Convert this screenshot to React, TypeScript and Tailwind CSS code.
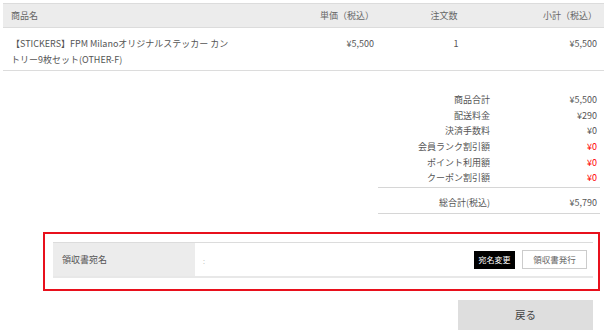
import React from "react";

const rows: { label: string; value: string; red?: boolean }[] = [
  { label: "商品合計", value: "¥5,500" },
  { label: "配送料金", value: "¥290" },
  { label: "決済手数料", value: "¥0" },
  { label: "会員ランク割引額", value: "¥0", red: true },
  { label: "ポイント利用額", value: "¥0", red: true },
  { label: "クーポン割引額", value: "¥0", red: true },
];

export default function App() {
  return (
    <div className="w-[612px] h-[335px] bg-white overflow-hidden font-['Noto_Sans_CJK_JP',sans-serif] text-[9px] text-[#555]">
      <div className="pt-[3px] pl-[3px] w-[604px]">
        <div className="flex items-center h-[25px] bg-[#ececec] border-t border-b border-[#dcdcdc] text-[#666]">
          <div className="w-[300px] pl-[8px]">商品名</div>
          <div className="w-[71px] text-right">単価（税込）</div>
          <div className="w-[140px] text-center">注文数</div>
          <div className="w-[90px] text-right pr-[7px]">小計（税込）</div>
        </div>
        <div className="flex items-start h-[43px] border-b border-[#dcdcdc] leading-[16px]">
          <div className="w-[300px] pl-[8px] pt-[8px]">
            <div className="w-[226px]">【STICKERS】FPM Milanoオリジナルステッカー カントリー9枚セット(OTHER-F)</div>
          </div>
          <div className="w-[71px] text-right pt-[8px]">¥5,500</div>
          <div className="w-[140px] text-center pt-[8px] pl-[24px]">1</div>
          <div className="w-[90px] text-right pr-[7px] pt-[8px]">¥5,500</div>
        </div>
      </div>

      <div className="ml-[378px] w-[222px] mt-[21px]">
        <div className="pb-[1px]">
          {rows.map((r) => (
            <div key={r.label} className="flex h-[15.7px] leading-[15.7px]">
              <div className="w-[112px] text-right">{r.label}</div>
              <div className={"flex-1 text-right pr-[3px] " + (r.red ? "text-[#ff0000]" : "")}>{r.value}</div>
            </div>
          ))}
        </div>
        <div className="border-t border-b border-[#d6d6d6] flex h-[27px] pt-[7px] leading-[15.7px]">
          <div className="w-[112px] text-right">総合計(税込)</div>
          <div className="flex-1 text-right pr-[3px]">¥5,790</div>
        </div>
      </div>

      <div className="ml-[43px] w-[557px] mt-[18px] border-2 border-[#e8101c] pt-[8px] pb-[11px] pl-[8px] pr-[5px]">
        <div className="flex h-[36px] border-t border-[#dcdcdc] border-b-2 border-b-[#e8e8e8]">
          <div className="w-[142px] bg-[#ececec] pl-[9px] flex items-center">領収書宛名</div>
          <div className="flex-1 flex items-center pl-[8px] pr-[6px]">
            <span className="text-[#bbb] text-[7px] pt-[4px]">:</span>
            <div className="ml-auto flex items-center gap-[7px]">
              <div className="w-[41px] h-[18px] bg-black text-white text-[8px] flex items-center justify-center">宛名変更</div>
              <div className="w-[65px] h-[19px] bg-white border border-[#ccc] text-[#666] text-[8.5px] flex items-center justify-center">領収書発行</div>
            </div>
          </div>
        </div>
      </div>

      <div className="ml-[458px] mt-[9px] w-[135px] h-[30px] bg-[#dedede] flex items-center justify-center text-[10.5px] text-[#444]">
        戻る
      </div>
    </div>
  );
}
